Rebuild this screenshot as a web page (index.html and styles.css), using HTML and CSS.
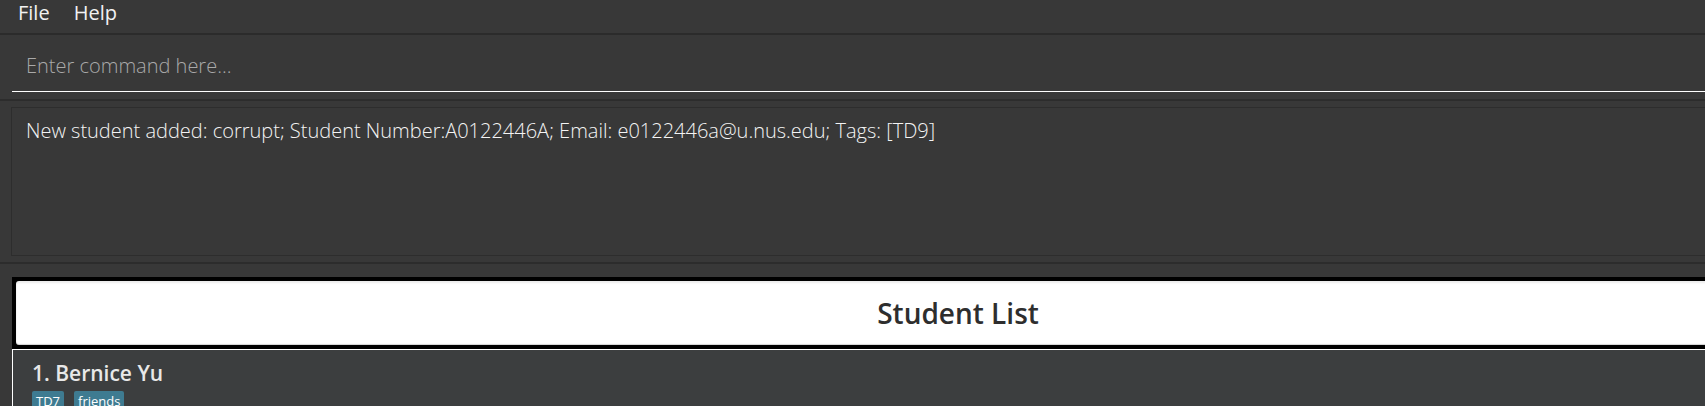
FILE: index.html
```html
<!DOCTYPE html>
<html lang="en">
<head>
<meta charset="utf-8">
<title>Student Book</title>
<link rel="stylesheet" href="styles.css">
</head>
<body>
<div class="app">
  <nav class="menubar">
    <span class="menu-item">File</span>
    <span class="menu-item">Help</span>
  </nav>
  <section class="command-pane">
    <div class="command-field"><span class="placeholder">Enter command here...</span></div>
  </section>
  <section class="result-pane">
    <div class="result-box">New student added: corrupt; Student Number:A0122446A; Email: e0122446a@u.nus.edu; Tags: [TD9]</div>
  </section>
  <section class="list-pane">
    <div class="list-header-frame">
      <div class="list-header">Student List</div>
    </div>
    <div class="card">
      <div class="card-name">1. Bernice Yu</div>
      <div class="tags">
        <span class="tag">TD7</span>
        <span class="tag">friends</span>
      </div>
    </div>
  </section>
</div>
</body>
</html>
```

FILE: styles.css
```css
html, body {
  margin: 0;
  padding: 0;
  background: #383838;
  overflow: hidden;
}

body {
  font-family: "Open Sans", "Noto Sans", sans-serif;
  color: #f0f0f0;
}

.app {
  width: 1916px;
  height: 406px;
  background: #383838;
  display: flex;
  flex-direction: column;
  overflow: hidden;
}

.app > * {
  flex: none;
}

/* menu bar */
.menubar {
  height: 33px;
  border-bottom: 2px solid #2b2b2b;
  display: flex;
  align-items: flex-start;
  padding-left: 6px;
  box-sizing: content-box;
}

.menu-item {
  padding: 0 12px;
  font-size: 20px;
  line-height: 26px;
  font-weight: 400;
  color: #f2f2f2;
}

/* command box */
.command-pane {
  height: 66px;
  border-bottom: 2px solid #2c2c2c;
  box-sizing: border-box;
  padding: 16px 0 0 12px;
}

.command-field {
  padding: 0 0 10px 14px;
  border-bottom: 1px solid #ffffff;
  line-height: 30px;
  font-size: 20px;
  font-weight: 300;
}

.placeholder {
  color: #a9a9a9;
}

/* result display */
.result-pane {
  height: 163px;
  border-bottom: 2px solid #2c2c2c;
  box-sizing: border-box;
  padding: 6px 0 0 11px;
}

.result-box {
  height: 149px;
  box-sizing: border-box;
  border: 1px solid #2d2d2d;
  padding: 8px 14px;
  font-size: 20px;
  line-height: 30px;
  font-weight: 300;
  color: #f4f4f4;
}

/* student list */
.list-pane {
  padding: 13px 12px 0 12px;
}

.list-header-frame {
  background: #000000;
  padding: 4px;
}

.list-header {
  height: 64px;
  background: #ffffff;
  border-radius: 3px;
  box-shadow: inset 0 2px 2px rgba(0, 0, 0, 0.08), inset 0 -1px 1px rgba(0, 0, 0, 0.18);
  display: flex;
  align-items: center;
  justify-content: center;
  font-size: 28px;
  font-weight: 600;
  color: #2e2e2e;
}

.card {
  background: #3c3e3f;
  border-top: 1px solid #ffffff;
  border-left: 1px solid #ffffff;
  padding: 9px 0 0 19px;
  height: 80px;
}

.card-name {
  font-size: 21px;
  line-height: 28px;
  font-weight: 600;
  color: #e8e8e8;
}

.tags {
  display: flex;
  gap: 10px;
  margin-top: 4px;
}

.tag {
  background: #3e7b91;
  color: #ffffff;
  font-size: 13px;
  line-height: 18px;
  padding: 1px 4px;
  border-radius: 2px;
}
```
